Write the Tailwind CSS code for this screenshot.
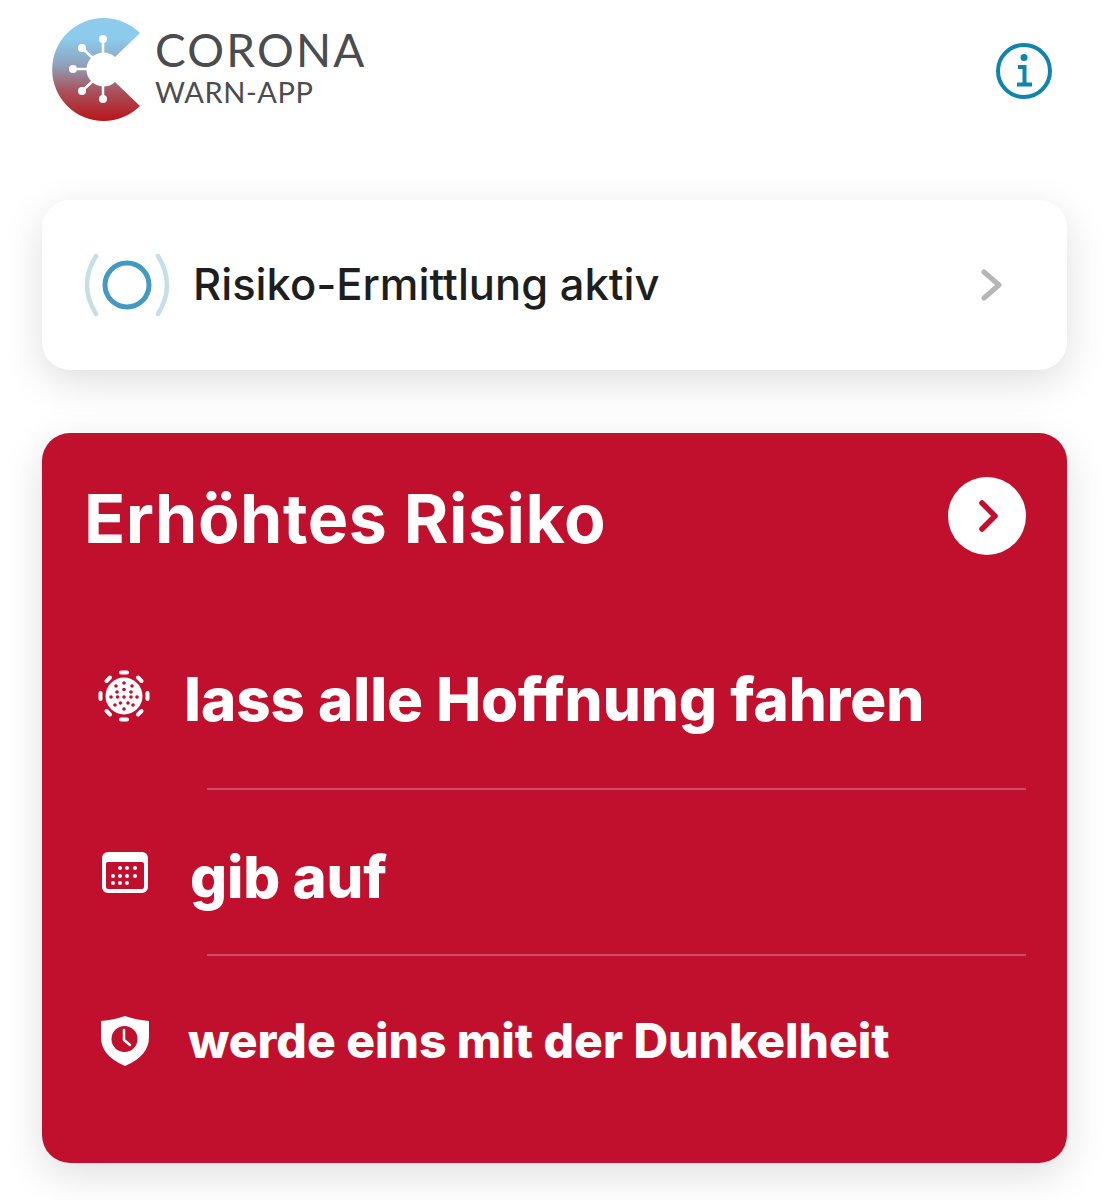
<!DOCTYPE html>
<html lang="de">
  <head>
    <meta charset="UTF-8" />
    <meta name="viewport" content="width=device-width, initial-scale=1.0" />
    <title>Corona-Warn-App</title>
    <script src="https://cdn.jsdelivr.net/npm/@tailwindcss/browser@4"></script>
  </head>
  <body class="bg-white font-['Inter',sans-serif] overflow-hidden">
    <div class="h-[1200px] w-[1109px] px-[42px] overflow-hidden">
      <!-- Header -->
      <header class="h-[200px] flex items-start justify-between">
        <div class="flex items-start ml-[8px] mt-[17px]">
          <svg width="92" height="106" viewBox="50 17 92 106">
            <defs>
              <linearGradient id="logo-grad" x1="0" y1="0" x2="0" y2="1">
                <stop offset="0.2" stop-color="#8ccbec" />
                <stop offset="0.45" stop-color="#8ea3bd" />
                <stop offset="0.7" stop-color="#a85460" />
                <stop offset="1" stop-color="#b81518" />
              </linearGradient>
            </defs>
            <path d="M140 33 A51.5 51.5 0 1 0 140 106 L115 82 A17 17 0 1 1 115 57 Z" fill="url(#logo-grad)" />
            <g stroke="#fff" stroke-width="2.5">
              <path d="M103 39 V58 M82 48 L95 60 M73 69 H90 M82 91 L95 79 M103 99 V80" />
            </g>
            <g fill="#fff">
              <circle cx="103" cy="39" r="4" />
              <circle cx="82" cy="48" r="4" />
              <circle cx="73" cy="69" r="4" />
              <circle cx="82" cy="91" r="4" />
              <circle cx="103" cy="99" r="4" />
            </g>
          </svg>
          <div class="ml-[13px] font-['Lato',sans-serif] text-[#4a4c4e]">
            <div class="text-[46px] leading-[46px] mt-[10px] tracking-[2.2px]">CORONA</div>
            <div class="text-[29px] leading-[29px] mt-[4px] tracking-[0.55px]">WARN-APP</div>
          </div>
        </div>
        <svg class="mt-[42px] mr-[14px]" width="58" height="58" viewBox="0 0 58 58" fill="none" stroke="#0f84ae">
          <circle cx="29" cy="29" r="26" stroke-width="4" />
          <circle cx="29" cy="15.5" r="3.5" fill="#0f84ae" stroke="none" />
          <path d="M23 25 H29.5 V42 M22 42.5 H37" stroke-width="4" />
        </svg>
      </header>

      <!-- Status card -->
      <div class="h-[170px] rounded-[28px] bg-white shadow-[0_12px_40px_rgba(0,0,0,0.13)] flex items-center pl-[40px] pr-[64px]">
        <svg width="90" height="66" viewBox="0 0 90 66" fill="none">
          <circle cx="45" cy="33" r="22" stroke="#4499c0" stroke-width="5" />
          <path d="M14 4 Q-4 33 14 62 M76 4 Q94 33 76 62" stroke="#c5dfe9" stroke-width="4.5" stroke-linecap="round" />
        </svg>
        <span class="ml-[21px] text-[43.5px] font-medium text-[#1c1e20]">Risiko-Ermittlung aktiv</span>
        <svg class="ml-auto" width="22" height="34" viewBox="0 0 22 34" fill="none">
          <path d="M3 4 L18 17 L3 30" stroke="#b4b6b8" stroke-width="5" stroke-linecap="round" stroke-linejoin="round" />
        </svg>
      </div>

      <!-- Risk card -->
      <div class="mt-[63px] h-[730px] rounded-[28px] bg-[#c0102d] text-white shadow-[0_12px_40px_rgba(0,0,0,0.13)] pl-[43px] pr-[41px]">
        <div class="h-[169px] flex items-start justify-between">
          <h1 class="mt-[45px] text-[68px] leading-[80px] font-bold tracking-[0.5px] -ml-[1px]">Erhöhtes Risiko</h1>
          <div class="mt-[44px] w-[78px] h-[78px] rounded-full bg-white flex items-center justify-center">
            <svg class="ml-[3px]" width="22" height="34" viewBox="0 0 22 34" fill="none">
              <path d="M4 4 L17 17 L4 30" stroke="#c0102d" stroke-width="5.5" stroke-linecap="round" stroke-linejoin="round" />
            </svg>
          </div>
        </div>

        <div class="h-[188px] flex flex-col">
          <div class="flex items-center h-[186px] pt-[1px]">
            <svg class="ml-[13px] shrink-0" width="52" height="52" viewBox="0 0 52 52">
              <circle cx="26" cy="26" r="18.5" fill="#fff" />
              <g stroke="#fff" stroke-width="4" stroke-linecap="round">
                <path d="M23 2.5 H29 M23 49.5 H29 M2.5 23 V29 M49.5 23 V29 M8.5 11 L12 7.5 M40 7.5 L43.5 11 M8.5 41 L12 44.5 M40 44.5 L43.5 41" />
              </g>
              <g fill="#c0102d">
                <circle cx="26" cy="13" r="1.8" />
                <circle cx="18" cy="16" r="1.8" />
                <circle cx="34" cy="16" r="1.8" />
                <circle cx="26" cy="19.5" r="1.8" />
                <circle cx="19" cy="22" r="1.8" />
                <circle cx="33" cy="22" r="1.8" />
                <circle cx="13" cy="27" r="1.8" />
                <circle cx="19.5" cy="27" r="1.8" />
                <circle cx="26" cy="27" r="1.8" />
                <circle cx="33" cy="27" r="1.8" />
                <circle cx="39" cy="27" r="1.8" />
                <circle cx="17" cy="35" r="1.8" />
                <circle cx="22.5" cy="33" r="1.8" />
                <circle cx="30" cy="33" r="1.8" />
                <circle cx="35" cy="35" r="1.8" />
                <circle cx="26" cy="39" r="1.8" />
              </g>
            </svg>
            <span class="ml-[34px] text-[60px] leading-[70px] font-extrabold tracking-[-0.05px] mt-[6px]">lass alle Hoffnung fahren</span>
          </div>
          <div class="ml-[122px] h-[2px] bg-white/25"></div>
        </div>

        <div class="h-[166px] flex flex-col">
          <div class="flex items-center h-[164px]">
            <svg class="ml-[17px] shrink-0" width="46" height="41" viewBox="0 0 46 41">
              <rect width="46" height="41" rx="6" fill="#fff" />
              <rect x="4" y="10" width="38" height="27" rx="2" fill="#c0102d" />
              <g fill="#fff">
                <circle cx="18" cy="16" r="2" /><circle cx="25" cy="16" r="2" /><circle cx="33" cy="16" r="2" />
                <circle cx="11" cy="24" r="2" /><circle cx="18" cy="24" r="2" /><circle cx="25" cy="24" r="2" /><circle cx="33" cy="24" r="2" />
                <circle cx="11" cy="31" r="2" /><circle cx="18" cy="31" r="2" /><circle cx="25" cy="31" r="2" />
              </g>
            </svg>
            <span class="ml-[42px] text-[58px] leading-[70px] font-extrabold tracking-[-0.15px] mt-[10px]">gib auf</span>
          </div>
          <div class="ml-[122px] h-[2px] bg-white/25"></div>
        </div>

        <div class="flex items-center h-[167px]">
          <svg class="ml-[15px] shrink-0 mt-[3px]" width="50" height="52" viewBox="0 0 50 52">
            <path d="M1 6 Q14 5 25 1 Q36 5 49 6 V22 Q49 41 25 51 Q1 41 1 22 Z" fill="#fff" />
            <circle cx="24.5" cy="24" r="13" fill="#c0102d" />
            <path d="M24 15 V25 L30 30" stroke="#fff" stroke-width="2.5" fill="none" stroke-linecap="round" stroke-linejoin="round" />
          </svg>
          <span class="ml-[38px] text-[48px] leading-[60px] font-extrabold tracking-[-0.05px] mt-[3px]">werde eins mit der Dunkelheit</span>
        </div>
      </div>
    </div>
  </body>
</html>
